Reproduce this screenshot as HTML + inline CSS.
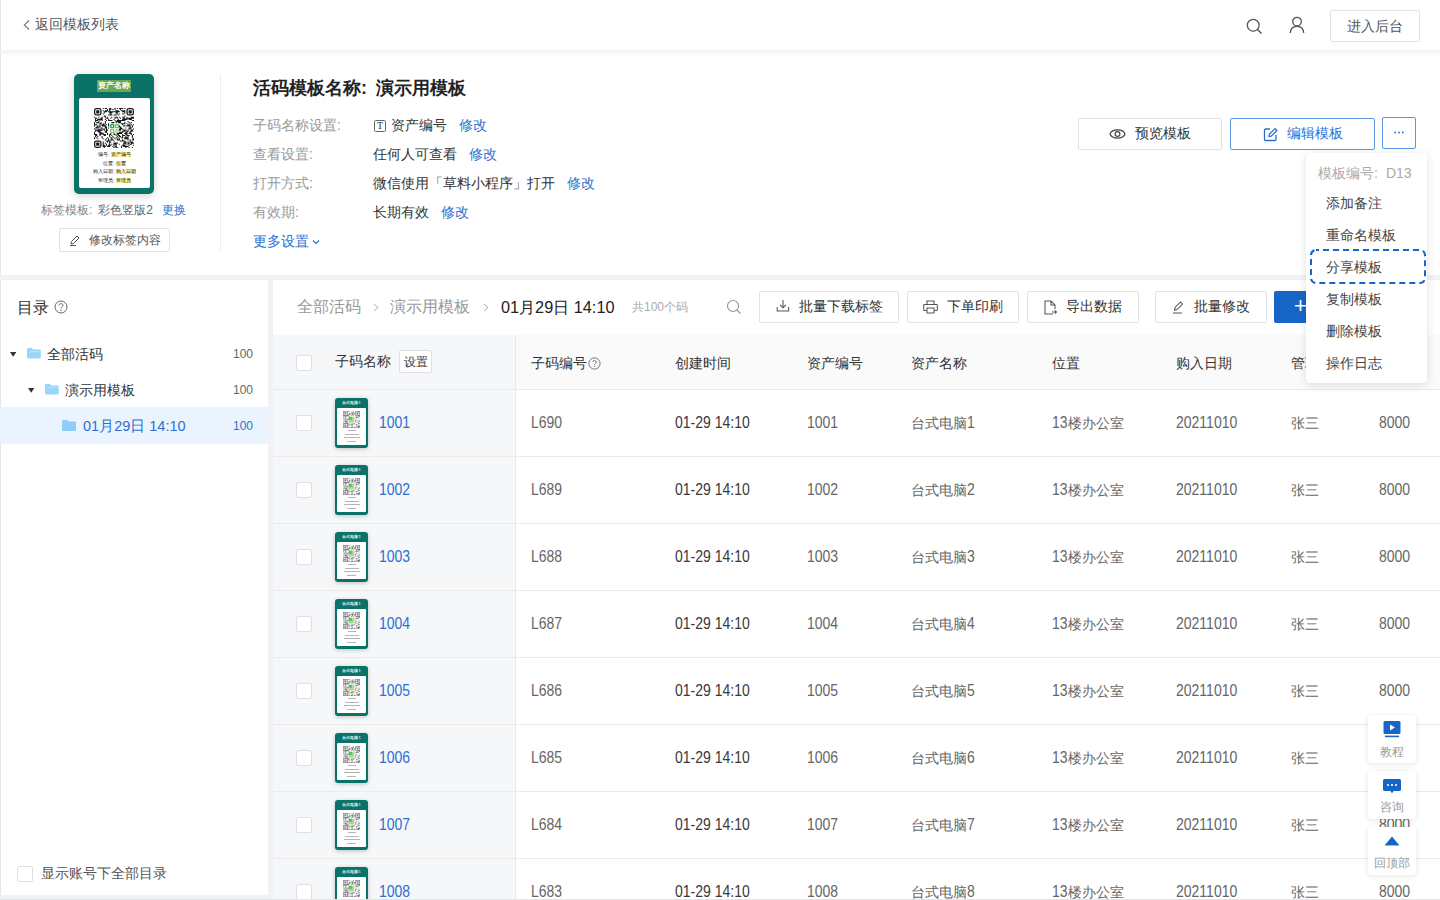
<!DOCTYPE html>
<html><head><meta charset="utf-8">
<style>
*{box-sizing:border-box;margin:0;padding:0}
html,body{width:1440px;height:900px;overflow:hidden;background:#f0f2f5;font-family:"Liberation Sans",sans-serif;color:#333}
.abs{position:absolute}
#hdr{position:absolute;left:0;top:0;width:1440px;height:50px;background:#fff;box-shadow:inset 1px 0 #e6e6e6}
#hdr .back{position:absolute;left:22px;top:14px;font-size:14px;color:#555;line-height:20px}
#info{position:absolute;left:0;top:52px;width:1440px;height:223px;background:#fff;box-shadow:inset 1px 0 #e6e6e6}
.shadow1{position:absolute;left:1px;top:50px;width:1439px;height:5px;background:linear-gradient(#f1f2f4,#f6f7f8 40%,#fdfdfd)}
#side{position:absolute;left:0;top:280px;width:268px;height:615px;background:#fff;box-shadow:inset 1px 0 #e6e6e6}
#main{position:absolute;left:273px;top:280px;width:1167px;height:620px;background:#fff}
.t14{font-size:14px;line-height:20px}
.gray{color:#999}
.blue{color:#2d6fd1}
.btn{position:absolute;border:1px solid #e2e2e2;border-radius:2px;background:#fff;font-size:14px;color:#333;display:flex;align-items:center;justify-content:center}
.row{position:absolute;left:273px;width:1167px;height:67px;border-bottom:1px solid #ebebeb;background:#fff}
.row .fix{position:absolute;left:0;top:0;width:243px;height:66px;background:#f6f7f9;border-right:1px solid #e8e9ee}
.cb{position:absolute;width:16px;height:16px;border:1px solid #dcdfe6;border-radius:2px;background:#fff}
.row .cb{left:23px;top:25px}
.th{position:absolute;left:62px;top:8px;width:33px;height:50px;background:#0b7268;border-radius:3px;box-shadow:0 1px 4px rgba(0,0,0,.22)}
.thh{height:10px;position:relative}.thh b{position:absolute;left:0;right:0;top:2px;text-align:center;font-size:3.8px;line-height:6px;color:rgba(255,255,255,.85);font-weight:bold;white-space:nowrap}
.thb{position:absolute;left:2px;top:10px;width:29px;height:37px;background:#fff;border-radius:1px}
.thb svg{display:block;margin:3px 0 0 6px}
.thb i{display:block;height:1.3px;margin:2.2px auto 0;background:#b5b5b5}
.nm{position:absolute;left:106px;top:23px;font-size:14px;line-height:20px;color:#2d6fd1;transform:scale(1.0,1.15);transform-origin:0 14.85px}
.c{position:absolute;top:23px;font-size:14px;line-height:20px;color:#666}
.dk{color:#3a3a3a}
.d{display:inline-block;transform:scaleY(1.2);transform-origin:0 14.85px}
#thead{position:absolute;left:273px;top:335px;width:1167px;height:55px;background:#fafafa;border-bottom:1px solid #e9e9e9}
#thead .fix{position:absolute;left:0;top:0;width:243px;height:54px;background:#f6f7f9;border-right:1px solid #e8e9ee}
.lbl{left:0;width:71px;text-align:center;font-size:4.5px;line-height:7px;color:#222;white-space:nowrap}.lbl b{font-weight:normal;background:#fff59d}
.cnt{left:233px;font-size:12px;line-height:16px;color:#666}
.dd{left:20px;color:#444;white-space:nowrap}
.fl{position:absolute;left:1368px;width:48px;height:48px;background:#fff;border-radius:4px;box-shadow:0 1px 6px rgba(0,0,0,.1)}
.fl span{position:absolute;left:0;right:0;top:28px;text-align:center;font-size:12px;line-height:16px;color:#999;white-space:nowrap}
.hc{position:absolute;top:16px;font-size:14px;line-height:20px;color:#333}
</style></head><body>
<div id="hdr">
  <span class="abs" style="left:22px;top:17px;width:9px;height:12px"><svg width="9" height="12" viewBox="0 0 9 12"><path d="M7 1.5 L2.3 6 L7 10.5" fill="none" stroke="#777" stroke-width="1.1"/></svg></span>
  <span class="abs t14" style="left:35px;top:14px;color:#555">返回模板列表</span>
  <span class="abs" style="left:1246px;top:18px"><svg width="17" height="17" viewBox="0 0 17 17"><circle cx="7.2" cy="7.2" r="5.9" fill="none" stroke="#555" stroke-width="1.25"/><path d="M11.5 11.5 L15.5 15.5" stroke="#555" stroke-width="1.4"/></svg></span>
  <span class="abs" style="left:1288px;top:16px"><svg width="18" height="18" viewBox="0 0 18 18"><circle cx="9" cy="5.6" r="4.3" fill="none" stroke="#555" stroke-width="1.3"/><path d="M2.3 17 C2.5 12.5 5.5 10.3 9 10.3 C12.5 10.3 15.5 12.5 15.7 17" fill="none" stroke="#555" stroke-width="1.3"/></svg></span>
  <div class="btn" style="left:1330px;top:10px;width:90px;height:32px;color:#555;padding-top:2px">进入后台</div>
</div>
<div id="info">
  <div class="abs" style="left:74px;top:22px;width:80px;height:120px;background:#0b7268;border-radius:5px;box-shadow:0 2px 8px rgba(0,0,0,.18)">
    <div class="abs" style="left:23px;top:6px;width:34px;height:12px;background:#6aa84f;color:#fff;font-size:8px;line-height:12px;font-weight:bold;text-align:center;white-space:nowrap;overflow:hidden">资产名称</div>
    <div class="abs" style="left:5px;top:24px;width:71px;height:90px;background:#fff;border-radius:2px">
      <div class="abs" style="left:15px;top:10px"><svg width="40" height="40" viewBox="0 0 37 37"><path d="M8 0h1v1h-1zM10 0h2v1h-2zM14 0h2v1h-2zM19 0h1v1h-1zM21 0h1v1h-1zM23 0h4v1h-4zM28 0h1v1h-1zM12 1h1v1h-1zM14 1h2v1h-2zM17 1h1v1h-1zM19 1h1v1h-1zM24 1h1v1h-1zM8 2h1v1h-1zM10 2h3v1h-3zM14 2h1v1h-1zM20 2h3v1h-3zM25 2h4v1h-4zM9 3h3v1h-3zM13 3h11v1h-11zM26 3h3v1h-3zM9 4h1v1h-1zM14 4h3v1h-3zM20 4h2v1h-2zM28 4h1v1h-1zM8 5h1v1h-1zM15 5h1v1h-1zM21 5h1v1h-1zM23 5h1v1h-1zM26 5h2v1h-2zM13 6h4v1h-4zM18 6h3v1h-3zM22 6h1v1h-1zM9 7h2v1h-2zM28 7h1v1h-1zM0 8h1v1h-1zM4 8h1v1h-1zM7 8h1v1h-1zM10 8h1v1h-1zM12 8h1v1h-1zM16 8h1v1h-1zM19 8h3v1h-3zM23 8h1v1h-1zM26 8h2v1h-2zM30 8h1v1h-1zM34 8h3v1h-3zM1 9h2v1h-2zM6 9h2v1h-2zM11 9h2v1h-2zM15 9h1v1h-1zM19 9h1v1h-1zM21 9h1v1h-1zM24 9h1v1h-1zM27 9h2v1h-2zM30 9h7v1h-7zM1 10h1v1h-1zM3 10h5v1h-5zM10 10h1v1h-1zM13 10h1v1h-1zM18 10h1v1h-1zM22 10h1v1h-1zM26 10h5v1h-5zM32 10h3v1h-3zM1 11h3v1h-3zM5 11h1v1h-1zM7 11h1v1h-1zM11 11h1v1h-1zM13 11h4v1h-4zM19 11h1v1h-1zM21 11h8v1h-8zM35 11h2v1h-2zM1 12h1v1h-1zM4 12h1v1h-1zM10 12h1v1h-1zM20 12h5v1h-5zM31 12h1v1h-1zM0 13h1v1h-1zM2 13h3v1h-3zM6 13h1v1h-1zM10 13h1v1h-1zM16 13h3v1h-3zM20 13h1v1h-1zM22 13h3v1h-3zM28 13h1v1h-1zM32 13h1v1h-1zM34 13h1v1h-1zM0 14h1v1h-1zM5 14h2v1h-2zM8 14h1v1h-1zM10 14h1v1h-1zM13 14h1v1h-1zM25 14h4v1h-4zM30 14h1v1h-1zM33 14h1v1h-1zM0 15h3v1h-3zM5 15h1v1h-1zM7 15h3v1h-3zM11 15h1v1h-1zM13 15h1v1h-1zM26 15h1v1h-1zM31 15h2v1h-2zM34 15h1v1h-1zM36 15h1v1h-1zM0 16h1v1h-1zM3 16h1v1h-1zM5 16h1v1h-1zM7 16h4v1h-4zM13 16h1v1h-1zM23 16h1v1h-1zM27 16h2v1h-2zM30 16h4v1h-4zM35 16h1v1h-1zM2 17h4v1h-4zM10 17h2v1h-2zM23 17h2v1h-2zM33 17h1v1h-1zM35 17h1v1h-1zM1 18h3v1h-3zM6 18h2v1h-2zM10 18h2v1h-2zM13 18h1v1h-1zM24 18h2v1h-2zM29 18h1v1h-1zM32 18h3v1h-3zM0 19h1v1h-1zM4 19h1v1h-1zM6 19h1v1h-1zM8 19h2v1h-2zM11 19h1v1h-1zM23 19h4v1h-4zM32 19h2v1h-2zM36 19h1v1h-1zM1 20h7v1h-7zM9 20h1v1h-1zM11 20h2v1h-2zM23 20h2v1h-2zM27 20h3v1h-3zM31 20h1v1h-1zM34 20h2v1h-2zM1 21h1v1h-1zM3 21h3v1h-3zM10 21h2v1h-2zM26 21h3v1h-3zM30 21h2v1h-2zM33 21h3v1h-3zM0 22h1v1h-1zM4 22h3v1h-3zM10 22h2v1h-2zM23 22h4v1h-4zM29 22h2v1h-2zM33 22h1v1h-1zM0 23h1v1h-1zM5 23h4v1h-4zM12 23h1v1h-1zM15 23h1v1h-1zM18 23h1v1h-1zM21 23h5v1h-5zM28 23h3v1h-3zM32 23h3v1h-3zM0 24h3v1h-3zM5 24h2v1h-2zM8 24h3v1h-3zM12 24h1v1h-1zM14 24h2v1h-2zM18 24h2v1h-2zM21 24h2v1h-2zM26 24h1v1h-1zM29 24h2v1h-2zM34 24h1v1h-1zM36 24h1v1h-1zM1 25h2v1h-2zM5 25h1v1h-1zM9 25h2v1h-2zM14 25h1v1h-1zM16 25h1v1h-1zM20 25h1v1h-1zM22 25h2v1h-2zM26 25h3v1h-3zM30 25h3v1h-3zM35 25h1v1h-1zM1 26h1v1h-1zM3 26h1v1h-1zM7 26h1v1h-1zM14 26h1v1h-1zM17 26h1v1h-1zM21 26h1v1h-1zM23 26h2v1h-2zM26 26h1v1h-1zM29 26h1v1h-1zM31 26h1v1h-1zM35 26h1v1h-1zM0 27h1v1h-1zM2 27h1v1h-1zM7 27h1v1h-1zM12 27h1v1h-1zM15 27h2v1h-2zM18 27h1v1h-1zM20 27h1v1h-1zM22 27h1v1h-1zM25 27h2v1h-2zM28 27h4v1h-4zM35 27h1v1h-1zM0 28h1v1h-1zM3 28h1v1h-1zM8 28h1v1h-1zM11 28h1v1h-1zM13 28h1v1h-1zM16 28h1v1h-1zM19 28h1v1h-1zM21 28h1v1h-1zM23 28h1v1h-1zM28 28h4v1h-4zM36 28h1v1h-1zM10 29h1v1h-1zM13 29h1v1h-1zM15 29h3v1h-3zM21 29h3v1h-3zM26 29h1v1h-1zM31 29h1v1h-1zM33 29h1v1h-1zM35 29h2v1h-2zM11 30h4v1h-4zM18 30h1v1h-1zM24 30h5v1h-5zM33 30h1v1h-1zM8 31h1v1h-1zM12 31h1v1h-1zM14 31h2v1h-2zM28 31h2v1h-2zM31 31h1v1h-1zM33 31h3v1h-3zM8 32h1v1h-1zM10 32h1v1h-1zM14 32h1v1h-1zM18 32h4v1h-4zM27 32h3v1h-3zM31 32h2v1h-2zM34 32h3v1h-3zM8 33h1v1h-1zM11 33h1v1h-1zM14 33h1v1h-1zM16 33h1v1h-1zM18 33h3v1h-3zM23 33h1v1h-1zM27 33h1v1h-1zM29 33h1v1h-1zM31 33h1v1h-1zM33 33h2v1h-2zM8 34h2v1h-2zM11 34h1v1h-1zM13 34h3v1h-3zM18 34h1v1h-1zM20 34h1v1h-1zM26 34h3v1h-3zM32 34h1v1h-1zM36 34h1v1h-1zM8 35h3v1h-3zM12 35h3v1h-3zM17 35h1v1h-1zM19 35h2v1h-2zM25 35h1v1h-1zM27 35h5v1h-5zM9 36h1v1h-1zM18 36h1v1h-1zM20 36h2v1h-2zM25 36h1v1h-1zM29 36h1v1h-1zM32 36h1v1h-1zM35 36h1v1h-1z" fill="#1a1a1a"/><rect x="0.6" y="0.6" width="5.8" height="5.8" rx="1.6" fill="none" stroke="#1a1a1a" stroke-width="1.2"/><rect x="2" y="2" width="3" height="3" rx=".6" fill="#1a1a1a"/><rect x="30.6" y="0.6" width="5.8" height="5.8" rx="1.6" fill="none" stroke="#1a1a1a" stroke-width="1.2"/><rect x="32" y="2" width="3" height="3" rx=".6" fill="#1a1a1a"/><rect x="0.6" y="30.6" width="5.8" height="5.8" rx="1.6" fill="none" stroke="#1a1a1a" stroke-width="1.2"/><rect x="2" y="32" width="3" height="3" rx=".6" fill="#1a1a1a"/><rect x="14.8" y="14.8" width="4" height="4" rx="1" fill="#1fae4b"/><rect x="19.2" y="14.8" width="4" height="4" rx="1" fill="#6cc46a"/><rect x="14.8" y="19.2" width="4" height="4" rx="1" fill="#8fd07a"/><rect x="19.2" y="19.2" width="4" height="4" rx="1" fill="#b6df9c"/><circle cx="16.8" cy="16.8" r=".8" fill="#fff"/><circle cx="21.2" cy="16.8" r=".8" fill="#fff"/><circle cx="16.8" cy="21.2" r=".8" fill="#fff"/></svg></div>
      <div class="abs lbl" style="top:53px">编号: <b>资产编号</b></div>
      <div class="abs lbl" style="top:61.5px">位置: <b>位置</b></div>
      <div class="abs lbl" style="top:70px">购入日期: <b>购入日期</b></div>
      <div class="abs lbl" style="top:78.5px">管理员: <b>管理员</b></div>
    </div>
  </div>
  <div class="abs" style="left:41px;top:150px;font-size:12px;line-height:16px;color:#888;white-space:nowrap">标签模板<span style="margin-right:6px">:</span><span style="color:#666">彩色竖版2</span><span class="blue" style="margin-left:9px">更换</span></div>
  <div class="btn" style="left:59px;top:176px;width:111px;height:24px;font-size:12px;color:#555"><svg width="12" height="12" viewBox="0 0 12 12" style="margin-right:8px"><path d="M2 10 L2.5 7.5 L8 2 L10 4 L4.5 9.5 Z M1 11.5 H7" fill="none" stroke="#555" stroke-width="1"/></svg>修改标签内容</div>
  <div class="abs" style="left:220px;top:22px;width:1px;height:178px;background:#eee"></div>
  <div class="abs" style="left:253px;top:24px;font-size:18px;line-height:24px;font-weight:bold;color:#222">活码模板名称<span style="margin-right:9px">:</span>演示用模板</div>
  <div class="abs t14 gray" style="left:253px;top:63px">子码名称设置:</div>
  <div class="abs t14 gray" style="left:253px;top:92px">查看设置:</div>
  <div class="abs t14 gray" style="left:253px;top:121px">打开方式:</div>
  <div class="abs t14 gray" style="left:253px;top:150px">有效期:</div>
  <div class="abs t14 blue" style="left:253px;top:179px">更多设置<svg width="8" height="6" viewBox="0 0 8 6" style="margin-left:3px;vertical-align:1px"><path d="M1 1.5 L4 4.5 L7 1.5" fill="none" stroke="#2d6fd1" stroke-width="1.2"/></svg></div>
  <div class="abs t14" style="left:373px;top:63px"><span style="display:inline-block;width:12px;height:12px;border:1px solid #666;border-radius:1.5px;font-size:10px;line-height:10px;text-align:center;vertical-align:1px;margin-left:1px;margin-right:5px;font-family:'Liberation Serif',serif;color:#333">T</span>资产编号 <span class="blue">&nbsp;&nbsp;修改</span></div>
  <div class="abs t14" style="left:373px;top:92px">任何人可查看 <span class="blue">&nbsp;&nbsp;修改</span></div>
  <div class="abs t14" style="left:373px;top:121px">微信使用「草料小程序」打开 <span class="blue">&nbsp;&nbsp;修改</span></div>
  <div class="abs t14" style="left:373px;top:150px">长期有效 <span class="blue">&nbsp;&nbsp;修改</span></div>
  <div class="btn" style="left:1078px;top:66px;width:144px;height:32px;color:#333"><svg width="17" height="12" viewBox="0 0 17 12" style="margin-right:9px"><path d="M1 6 C3 0.6 14 0.6 16 6 C14 11.4 3 11.4 1 6 Z" fill="none" stroke="#444" stroke-width="1.2"/><circle cx="8.5" cy="6" r="2.4" fill="none" stroke="#444" stroke-width="1.2"/></svg>预览模板</div>
  <div class="btn" style="left:1230px;top:66px;width:145px;height:32px;color:#2d6fd1;border-color:#5a98e4"><svg width="15" height="15" viewBox="0 0 15 15" style="margin-right:9px"><path d="M7 2 H2.5 A1 1 0 0 0 1.5 3 V12.5 A1 1 0 0 0 2.5 13.5 H12 A1 1 0 0 0 13 12.5 V8" fill="none" stroke="#2d6fd1" stroke-width="1.3"/><path d="M6 9.5 L6.3 7.3 L12 1.6 L13.9 3.5 L8.2 9.2 Z" fill="none" stroke="#2d6fd1" stroke-width="1.3"/></svg>编辑模板</div>
  <div class="btn" style="left:1382px;top:64.5px;width:34px;height:32px;border-color:#5a98e4"><svg width="10" height="3" viewBox="0 0 10 3"><circle cx="1.2" cy="1.5" r=".9" fill="#2d6fd1"/><circle cx="5" cy="1.5" r=".9" fill="#2d6fd1"/><circle cx="8.8" cy="1.5" r=".9" fill="#2d6fd1"/></svg></div>
</div>
<div class="shadow1"></div>
<div id="side">
  <div class="abs" style="left:17px;top:17px;font-size:16px;line-height:22px;color:#333">目录</div>
  <span class="abs" style="left:54px;top:20px"><svg width="14" height="14" viewBox="0 0 14 14"><circle cx="7" cy="7" r="6" fill="none" stroke="#666" stroke-width="1"/><path d="M5 5.3 C5 3.2 9 3.2 9 5.3 C9 6.6 7 6.8 7 8.3" fill="none" stroke="#666" stroke-width="1"/><circle cx="7" cy="10.2" r=".7" fill="#666"/></svg></span>
  <svg class="abs" style="left:10px;top:71.7px" width="6.4" height="5" viewBox="0 0 6.4 5"><path d="M0 0 H6.4 L3.2 4.7 Z" fill="#333"/></svg>
  <svg class="abs" style="left:26.5px;top:68.3px" width="14" height="10.5" viewBox="0 0 14 10.5"><path d="M0 1.2 A1.2 1.2 0 0 1 1.2 0 H4.8 L6.2 1.4 H12.6 A1.2 1.2 0 0 1 13.8 2.6 V9.3 A1.2 1.2 0 0 1 12.6 10.5 H1.2 A1.2 1.2 0 0 1 0 9.3 Z" fill="#9ad5f8"/><path d="M2.2 5.2 L3 3.6 H13.8" fill="none" stroke="#c9e9fc" stroke-width=".7"/></svg>
  <div class="abs t14" style="left:47px;top:64px;color:#333">全部活码</div>
  <div class="abs cnt" style="top:66px">100</div>
  <svg class="abs" style="left:28px;top:107.7px" width="6.4" height="5" viewBox="0 0 6.4 5"><path d="M0 0 H6.4 L3.2 4.7 Z" fill="#333"/></svg>
  <svg class="abs" style="left:44.5px;top:104.3px" width="14" height="10.5" viewBox="0 0 14 10.5"><path d="M0 1.2 A1.2 1.2 0 0 1 1.2 0 H4.8 L6.2 1.4 H12.6 A1.2 1.2 0 0 1 13.8 2.6 V9.3 A1.2 1.2 0 0 1 12.6 10.5 H1.2 A1.2 1.2 0 0 1 0 9.3 Z" fill="#9ad5f8"/><path d="M2.2 5.2 L3 3.6 H13.8" fill="none" stroke="#c9e9fc" stroke-width=".7"/></svg>
  <div class="abs t14" style="left:65px;top:100px;color:#333">演示用模板</div>
  <div class="abs cnt" style="top:102px">100</div>
  <div class="abs" style="left:0;top:127px;width:268px;height:37px;background:#e9f4fe"></div>
  <svg class="abs" style="left:62px;top:140px" width="14" height="11" viewBox="0 0 14 11"><path d="M0 1 A1 1 0 0 1 1 0 H5 L6.5 1.5 H13 A1 1 0 0 1 14 2.5 V10 A1 1 0 0 1 13 11 H1 A1 1 0 0 1 0 10 Z" fill="#8fcdf8"/></svg>
  <div class="abs" style="left:83px;top:135px;font-size:14.5px;line-height:22px;color:#2d6fd1">01月29日 14:10</div>
  <div class="abs cnt" style="top:138px;color:#2d6fd1">100</div>
  <span class="cb" style="left:17px;top:586px"></span>
  <div class="abs t14" style="left:41px;top:583px;color:#555">显示账号下全部目录</div>
</div>
<div id="main">
  <div class="abs" style="left:24px;top:16px;font-size:16px;line-height:22px;color:#999;white-space:nowrap">全部活码</div>
  <svg class="abs" style="left:100px;top:23px" width="6" height="9" viewBox="0 0 6 9"><path d="M1 1 L5 4.5 L1 8" fill="none" stroke="#aaa" stroke-width="1"/></svg>
  <div class="abs" style="left:117px;top:16px;font-size:16px;line-height:22px;color:#999;white-space:nowrap">演示用模板</div>
  <svg class="abs" style="left:210px;top:23px" width="6" height="9" viewBox="0 0 6 9"><path d="M1 1 L5 4.5 L1 8" fill="none" stroke="#aaa" stroke-width="1"/></svg>
  <div class="abs" style="left:228px;top:16px;font-size:16.3px;line-height:22px;color:#222;white-space:nowrap">01月29日 14:10</div>
  <div class="abs" style="left:359px;top:19px;font-size:12px;line-height:16px;color:#aaa;white-space:nowrap">共100个码</div>
  <svg class="abs" style="left:453px;top:19px" width="16" height="16" viewBox="0 0 16 16"><circle cx="7" cy="7" r="5.5" fill="none" stroke="#999" stroke-width="1.2"/><path d="M11 11 L14.5 14.5" stroke="#999" stroke-width="1.3"/></svg>
  <div class="btn" style="left:486px;top:11px;width:140px;height:32px"><svg width="14" height="14" viewBox="0 0 14 14" style="margin-right:9px;position:relative;top:-1px"><path d="M7 1 V8.8 M4 5.8 L7 8.8 L10 5.8 M1.2 8 V12 H12.6 V8" fill="none" stroke="#555" stroke-width="1.05"/></svg>批量下载标签</div>
  <div class="btn" style="left:634px;top:11px;width:112px;height:32px"><svg width="15" height="14" viewBox="0 0 15 14" style="margin-right:9px"><path d="M4 4.5 V1 H11 V4.5 M4 10.5 H1.5 A0.8 .8 0 0 1 .7 9.7 V5.3 A.8 .8 0 0 1 1.5 4.5 H13.5 A.8 .8 0 0 1 14.3 5.3 V9.7 A.8 .8 0 0 1 13.5 10.5 H11 M4 8 H11 V13 H4 Z" fill="none" stroke="#555" stroke-width="1.05"/></svg>下单印刷</div>
  <div class="btn" style="left:754px;top:11px;width:112px;height:32px"><svg width="13" height="15" viewBox="0 0 13 15" style="margin-right:9px"><path d="M9 14 H1 V1 H7 L11 5 V9 M7 1 V5 H11 M8 12 H12.5 M10.8 10.3 L12.5 12 L10.8 13.7" fill="none" stroke="#555" stroke-width="1.05"/></svg>导出数据</div>
  <div class="btn" style="left:882px;top:11px;width:112px;height:32px"><svg width="13" height="14" viewBox="0 0 13 14" style="margin-right:9px"><path d="M2.5 10 L3 7.5 L8.5 2 L10.5 4 L5 9.5 Z M1 13 H10" fill="none" stroke="#555" stroke-width="1.05"/></svg>批量修改</div>
  <div class="abs" style="left:1001px;top:11px;width:146px;height:32px;background:#1766c7;border-radius:2px;color:#fff;font-size:22px;line-height:30px;padding-left:20px">+</div>
</div>
<div id="thead">
  <div class="fix"><span class="cb" style="left:23px;top:20px"></span><span class="hc" style="left:62px">子码名称</span><span class="abs" style="left:126px;top:15px;width:33px;height:23px;border:1px solid #dcdfe6;border-radius:2px;background:#fff;font-size:12px;line-height:23px;text-align:center;color:#333">设置</span></div>
  <span class="hc" style="left:258px;top:17.5px">子码编号<svg width="13" height="13" viewBox="0 0 13 13" style="vertical-align:-2px;margin-left:1px"><circle cx="6.5" cy="6.5" r="5.6" fill="none" stroke="#666" stroke-width=".9"/><path d="M4.7 5 C4.7 3.1 8.3 3.1 8.3 5 C8.3 6.2 6.5 6.3 6.5 7.7" fill="none" stroke="#666" stroke-width=".9"/><circle cx="6.5" cy="9.5" r=".6" fill="#666"/></svg></span>
  <span class="hc" style="left:402px;top:17.5px">创建时间</span>
  <span class="hc" style="left:534px;top:17.5px">资产编号</span>
  <span class="hc" style="left:638px;top:17.5px">资产名称</span>
  <span class="hc" style="left:779px;top:17.5px">位置</span>
  <span class="hc" style="left:903px;top:17.5px">购入日期</span>
  <span class="hc" style="left:1018px;top:17.5px">管理员</span>
</div>
<div class="row" style="top:390px">
<div class="fix"><span class="cb" style="top:25px"></span><div class="th"><div class="thh"><b>台式电脑1</b></div><div class="thb"><svg width="17" height="17" viewBox="0 0 25 25"><path d="M0 0h7v1h-7zM8 0h2v1h-2zM15 0h1v1h-1zM18 0h7v1h-7zM0 1h1v1h-1zM6 1h2v1h-2zM12 1h3v1h-3zM18 1h1v1h-1zM24 1h1v1h-1zM0 2h1v1h-1zM2 2h3v1h-3zM6 2h1v1h-1zM11 2h1v1h-1zM14 2h2v1h-2zM18 2h1v1h-1zM20 2h3v1h-3zM24 2h1v1h-1zM0 3h1v1h-1zM2 3h3v1h-3zM6 3h1v1h-1zM9 3h2v1h-2zM12 3h3v1h-3zM16 3h3v1h-3zM20 3h3v1h-3zM24 3h1v1h-1zM0 4h1v1h-1zM2 4h3v1h-3zM6 4h1v1h-1zM8 4h2v1h-2zM13 4h2v1h-2zM16 4h1v1h-1zM18 4h1v1h-1zM20 4h3v1h-3zM24 4h1v1h-1zM0 5h1v1h-1zM6 5h1v1h-1zM8 5h4v1h-4zM13 5h2v1h-2zM16 5h1v1h-1zM18 5h1v1h-1zM24 5h1v1h-1zM0 6h9v1h-9zM12 6h2v1h-2zM15 6h1v1h-1zM18 6h7v1h-7zM0 7h1v1h-1zM2 7h5v1h-5zM8 7h2v1h-2zM16 7h1v1h-1zM21 7h4v1h-4zM1 8h1v1h-1zM3 8h1v1h-1zM19 8h2v1h-2zM24 8h1v1h-1zM0 9h1v1h-1zM3 9h1v1h-1zM18 9h5v1h-5zM0 10h1v1h-1zM2 10h3v1h-3zM7 10h1v1h-1zM19 10h1v1h-1zM23 10h1v1h-1zM4 11h1v1h-1zM7 11h1v1h-1zM17 11h1v1h-1zM0 12h1v1h-1zM2 12h2v1h-2zM5 12h3v1h-3zM19 12h1v1h-1zM23 12h1v1h-1zM1 13h2v1h-2zM5 13h3v1h-3zM18 13h1v1h-1zM20 13h1v1h-1zM3 14h2v1h-2zM18 14h1v1h-1zM20 14h1v1h-1zM23 14h2v1h-2zM0 15h1v1h-1zM2 15h4v1h-4zM7 15h1v1h-1zM18 15h1v1h-1zM22 15h2v1h-2zM3 16h4v1h-4zM18 16h2v1h-2zM22 16h2v1h-2zM1 17h1v1h-1zM4 17h1v1h-1zM6 17h2v1h-2zM9 17h1v1h-1zM12 17h1v1h-1zM14 17h1v1h-1zM17 17h1v1h-1zM21 17h1v1h-1zM0 18h8v1h-8zM10 18h1v1h-1zM13 18h1v1h-1zM15 18h2v1h-2zM22 18h3v1h-3zM0 19h1v1h-1zM6 19h1v1h-1zM8 19h1v1h-1zM10 19h1v1h-1zM12 19h3v1h-3zM17 19h1v1h-1zM19 19h4v1h-4zM0 20h1v1h-1zM2 20h3v1h-3zM6 20h4v1h-4zM12 20h2v1h-2zM15 20h1v1h-1zM19 20h1v1h-1zM0 21h1v1h-1zM2 21h3v1h-3zM6 21h1v1h-1zM11 21h1v1h-1zM13 21h1v1h-1zM20 21h1v1h-1zM23 21h2v1h-2zM0 22h1v1h-1zM2 22h3v1h-3zM6 22h2v1h-2zM13 22h1v1h-1zM20 22h5v1h-5zM0 23h1v1h-1zM6 23h1v1h-1zM8 23h2v1h-2zM12 23h2v1h-2zM16 23h3v1h-3zM20 23h1v1h-1zM22 23h3v1h-3zM0 24h8v1h-8zM9 24h1v1h-1zM11 24h4v1h-4zM16 24h2v1h-2zM19 24h1v1h-1zM21 24h3v1h-3z" fill="#555" fill-opacity=".75"/><rect x="8.5" y="8.5" width="8" height="8" fill="#a5dd86"/><rect x="8.5" y="8.5" width="4.5" height="4.5" fill="#4cc06a"/></svg><i style="width:8px"></i><i style="width:14px"></i><i style="width:16px"></i><i style="width:9px"></i></div></div><span class="nm">1001</span></div>
<span class="c" style="left:258px"><span class="d">L690</span></span>
<span class="c dk" style="left:402px"><span class="d">01-29 14:10</span></span>
<span class="c" style="left:534px"><span class="d">1001</span></span>
<span class="c" style="left:638px">台式电脑<span class="d">1</span></span>
<span class="c" style="left:779px"><span class="d">13</span>楼办公室</span>
<span class="c" style="left:903px"><span class="d">20211010</span></span>
<span class="c" style="left:1018px">张三</span>
<span class="c" style="left:1106px"><span class="d">8000</span></span>
</div><div class="row" style="top:457px">
<div class="fix"><span class="cb" style="top:25px"></span><div class="th"><div class="thh"><b>台式电脑1</b></div><div class="thb"><svg width="17" height="17" viewBox="0 0 25 25"><path d="M0 0h7v1h-7zM8 0h2v1h-2zM15 0h1v1h-1zM18 0h7v1h-7zM0 1h1v1h-1zM6 1h2v1h-2zM12 1h3v1h-3zM18 1h1v1h-1zM24 1h1v1h-1zM0 2h1v1h-1zM2 2h3v1h-3zM6 2h1v1h-1zM11 2h1v1h-1zM14 2h2v1h-2zM18 2h1v1h-1zM20 2h3v1h-3zM24 2h1v1h-1zM0 3h1v1h-1zM2 3h3v1h-3zM6 3h1v1h-1zM9 3h2v1h-2zM12 3h3v1h-3zM16 3h3v1h-3zM20 3h3v1h-3zM24 3h1v1h-1zM0 4h1v1h-1zM2 4h3v1h-3zM6 4h1v1h-1zM8 4h2v1h-2zM13 4h2v1h-2zM16 4h1v1h-1zM18 4h1v1h-1zM20 4h3v1h-3zM24 4h1v1h-1zM0 5h1v1h-1zM6 5h1v1h-1zM8 5h4v1h-4zM13 5h2v1h-2zM16 5h1v1h-1zM18 5h1v1h-1zM24 5h1v1h-1zM0 6h9v1h-9zM12 6h2v1h-2zM15 6h1v1h-1zM18 6h7v1h-7zM0 7h1v1h-1zM2 7h5v1h-5zM8 7h2v1h-2zM16 7h1v1h-1zM21 7h4v1h-4zM1 8h1v1h-1zM3 8h1v1h-1zM19 8h2v1h-2zM24 8h1v1h-1zM0 9h1v1h-1zM3 9h1v1h-1zM18 9h5v1h-5zM0 10h1v1h-1zM2 10h3v1h-3zM7 10h1v1h-1zM19 10h1v1h-1zM23 10h1v1h-1zM4 11h1v1h-1zM7 11h1v1h-1zM17 11h1v1h-1zM0 12h1v1h-1zM2 12h2v1h-2zM5 12h3v1h-3zM19 12h1v1h-1zM23 12h1v1h-1zM1 13h2v1h-2zM5 13h3v1h-3zM18 13h1v1h-1zM20 13h1v1h-1zM3 14h2v1h-2zM18 14h1v1h-1zM20 14h1v1h-1zM23 14h2v1h-2zM0 15h1v1h-1zM2 15h4v1h-4zM7 15h1v1h-1zM18 15h1v1h-1zM22 15h2v1h-2zM3 16h4v1h-4zM18 16h2v1h-2zM22 16h2v1h-2zM1 17h1v1h-1zM4 17h1v1h-1zM6 17h2v1h-2zM9 17h1v1h-1zM12 17h1v1h-1zM14 17h1v1h-1zM17 17h1v1h-1zM21 17h1v1h-1zM0 18h8v1h-8zM10 18h1v1h-1zM13 18h1v1h-1zM15 18h2v1h-2zM22 18h3v1h-3zM0 19h1v1h-1zM6 19h1v1h-1zM8 19h1v1h-1zM10 19h1v1h-1zM12 19h3v1h-3zM17 19h1v1h-1zM19 19h4v1h-4zM0 20h1v1h-1zM2 20h3v1h-3zM6 20h4v1h-4zM12 20h2v1h-2zM15 20h1v1h-1zM19 20h1v1h-1zM0 21h1v1h-1zM2 21h3v1h-3zM6 21h1v1h-1zM11 21h1v1h-1zM13 21h1v1h-1zM20 21h1v1h-1zM23 21h2v1h-2zM0 22h1v1h-1zM2 22h3v1h-3zM6 22h2v1h-2zM13 22h1v1h-1zM20 22h5v1h-5zM0 23h1v1h-1zM6 23h1v1h-1zM8 23h2v1h-2zM12 23h2v1h-2zM16 23h3v1h-3zM20 23h1v1h-1zM22 23h3v1h-3zM0 24h8v1h-8zM9 24h1v1h-1zM11 24h4v1h-4zM16 24h2v1h-2zM19 24h1v1h-1zM21 24h3v1h-3z" fill="#555" fill-opacity=".75"/><rect x="8.5" y="8.5" width="8" height="8" fill="#a5dd86"/><rect x="8.5" y="8.5" width="4.5" height="4.5" fill="#4cc06a"/></svg><i style="width:8px"></i><i style="width:14px"></i><i style="width:16px"></i><i style="width:9px"></i></div></div><span class="nm">1002</span></div>
<span class="c" style="left:258px"><span class="d">L689</span></span>
<span class="c dk" style="left:402px"><span class="d">01-29 14:10</span></span>
<span class="c" style="left:534px"><span class="d">1002</span></span>
<span class="c" style="left:638px">台式电脑<span class="d">2</span></span>
<span class="c" style="left:779px"><span class="d">13</span>楼办公室</span>
<span class="c" style="left:903px"><span class="d">20211010</span></span>
<span class="c" style="left:1018px">张三</span>
<span class="c" style="left:1106px"><span class="d">8000</span></span>
</div><div class="row" style="top:524px">
<div class="fix"><span class="cb" style="top:25px"></span><div class="th"><div class="thh"><b>台式电脑1</b></div><div class="thb"><svg width="17" height="17" viewBox="0 0 25 25"><path d="M0 0h7v1h-7zM8 0h2v1h-2zM15 0h1v1h-1zM18 0h7v1h-7zM0 1h1v1h-1zM6 1h2v1h-2zM12 1h3v1h-3zM18 1h1v1h-1zM24 1h1v1h-1zM0 2h1v1h-1zM2 2h3v1h-3zM6 2h1v1h-1zM11 2h1v1h-1zM14 2h2v1h-2zM18 2h1v1h-1zM20 2h3v1h-3zM24 2h1v1h-1zM0 3h1v1h-1zM2 3h3v1h-3zM6 3h1v1h-1zM9 3h2v1h-2zM12 3h3v1h-3zM16 3h3v1h-3zM20 3h3v1h-3zM24 3h1v1h-1zM0 4h1v1h-1zM2 4h3v1h-3zM6 4h1v1h-1zM8 4h2v1h-2zM13 4h2v1h-2zM16 4h1v1h-1zM18 4h1v1h-1zM20 4h3v1h-3zM24 4h1v1h-1zM0 5h1v1h-1zM6 5h1v1h-1zM8 5h4v1h-4zM13 5h2v1h-2zM16 5h1v1h-1zM18 5h1v1h-1zM24 5h1v1h-1zM0 6h9v1h-9zM12 6h2v1h-2zM15 6h1v1h-1zM18 6h7v1h-7zM0 7h1v1h-1zM2 7h5v1h-5zM8 7h2v1h-2zM16 7h1v1h-1zM21 7h4v1h-4zM1 8h1v1h-1zM3 8h1v1h-1zM19 8h2v1h-2zM24 8h1v1h-1zM0 9h1v1h-1zM3 9h1v1h-1zM18 9h5v1h-5zM0 10h1v1h-1zM2 10h3v1h-3zM7 10h1v1h-1zM19 10h1v1h-1zM23 10h1v1h-1zM4 11h1v1h-1zM7 11h1v1h-1zM17 11h1v1h-1zM0 12h1v1h-1zM2 12h2v1h-2zM5 12h3v1h-3zM19 12h1v1h-1zM23 12h1v1h-1zM1 13h2v1h-2zM5 13h3v1h-3zM18 13h1v1h-1zM20 13h1v1h-1zM3 14h2v1h-2zM18 14h1v1h-1zM20 14h1v1h-1zM23 14h2v1h-2zM0 15h1v1h-1zM2 15h4v1h-4zM7 15h1v1h-1zM18 15h1v1h-1zM22 15h2v1h-2zM3 16h4v1h-4zM18 16h2v1h-2zM22 16h2v1h-2zM1 17h1v1h-1zM4 17h1v1h-1zM6 17h2v1h-2zM9 17h1v1h-1zM12 17h1v1h-1zM14 17h1v1h-1zM17 17h1v1h-1zM21 17h1v1h-1zM0 18h8v1h-8zM10 18h1v1h-1zM13 18h1v1h-1zM15 18h2v1h-2zM22 18h3v1h-3zM0 19h1v1h-1zM6 19h1v1h-1zM8 19h1v1h-1zM10 19h1v1h-1zM12 19h3v1h-3zM17 19h1v1h-1zM19 19h4v1h-4zM0 20h1v1h-1zM2 20h3v1h-3zM6 20h4v1h-4zM12 20h2v1h-2zM15 20h1v1h-1zM19 20h1v1h-1zM0 21h1v1h-1zM2 21h3v1h-3zM6 21h1v1h-1zM11 21h1v1h-1zM13 21h1v1h-1zM20 21h1v1h-1zM23 21h2v1h-2zM0 22h1v1h-1zM2 22h3v1h-3zM6 22h2v1h-2zM13 22h1v1h-1zM20 22h5v1h-5zM0 23h1v1h-1zM6 23h1v1h-1zM8 23h2v1h-2zM12 23h2v1h-2zM16 23h3v1h-3zM20 23h1v1h-1zM22 23h3v1h-3zM0 24h8v1h-8zM9 24h1v1h-1zM11 24h4v1h-4zM16 24h2v1h-2zM19 24h1v1h-1zM21 24h3v1h-3z" fill="#555" fill-opacity=".75"/><rect x="8.5" y="8.5" width="8" height="8" fill="#a5dd86"/><rect x="8.5" y="8.5" width="4.5" height="4.5" fill="#4cc06a"/></svg><i style="width:8px"></i><i style="width:14px"></i><i style="width:16px"></i><i style="width:9px"></i></div></div><span class="nm">1003</span></div>
<span class="c" style="left:258px"><span class="d">L688</span></span>
<span class="c dk" style="left:402px"><span class="d">01-29 14:10</span></span>
<span class="c" style="left:534px"><span class="d">1003</span></span>
<span class="c" style="left:638px">台式电脑<span class="d">3</span></span>
<span class="c" style="left:779px"><span class="d">13</span>楼办公室</span>
<span class="c" style="left:903px"><span class="d">20211010</span></span>
<span class="c" style="left:1018px">张三</span>
<span class="c" style="left:1106px"><span class="d">8000</span></span>
</div><div class="row" style="top:591px">
<div class="fix"><span class="cb" style="top:25px"></span><div class="th"><div class="thh"><b>台式电脑1</b></div><div class="thb"><svg width="17" height="17" viewBox="0 0 25 25"><path d="M0 0h7v1h-7zM8 0h2v1h-2zM15 0h1v1h-1zM18 0h7v1h-7zM0 1h1v1h-1zM6 1h2v1h-2zM12 1h3v1h-3zM18 1h1v1h-1zM24 1h1v1h-1zM0 2h1v1h-1zM2 2h3v1h-3zM6 2h1v1h-1zM11 2h1v1h-1zM14 2h2v1h-2zM18 2h1v1h-1zM20 2h3v1h-3zM24 2h1v1h-1zM0 3h1v1h-1zM2 3h3v1h-3zM6 3h1v1h-1zM9 3h2v1h-2zM12 3h3v1h-3zM16 3h3v1h-3zM20 3h3v1h-3zM24 3h1v1h-1zM0 4h1v1h-1zM2 4h3v1h-3zM6 4h1v1h-1zM8 4h2v1h-2zM13 4h2v1h-2zM16 4h1v1h-1zM18 4h1v1h-1zM20 4h3v1h-3zM24 4h1v1h-1zM0 5h1v1h-1zM6 5h1v1h-1zM8 5h4v1h-4zM13 5h2v1h-2zM16 5h1v1h-1zM18 5h1v1h-1zM24 5h1v1h-1zM0 6h9v1h-9zM12 6h2v1h-2zM15 6h1v1h-1zM18 6h7v1h-7zM0 7h1v1h-1zM2 7h5v1h-5zM8 7h2v1h-2zM16 7h1v1h-1zM21 7h4v1h-4zM1 8h1v1h-1zM3 8h1v1h-1zM19 8h2v1h-2zM24 8h1v1h-1zM0 9h1v1h-1zM3 9h1v1h-1zM18 9h5v1h-5zM0 10h1v1h-1zM2 10h3v1h-3zM7 10h1v1h-1zM19 10h1v1h-1zM23 10h1v1h-1zM4 11h1v1h-1zM7 11h1v1h-1zM17 11h1v1h-1zM0 12h1v1h-1zM2 12h2v1h-2zM5 12h3v1h-3zM19 12h1v1h-1zM23 12h1v1h-1zM1 13h2v1h-2zM5 13h3v1h-3zM18 13h1v1h-1zM20 13h1v1h-1zM3 14h2v1h-2zM18 14h1v1h-1zM20 14h1v1h-1zM23 14h2v1h-2zM0 15h1v1h-1zM2 15h4v1h-4zM7 15h1v1h-1zM18 15h1v1h-1zM22 15h2v1h-2zM3 16h4v1h-4zM18 16h2v1h-2zM22 16h2v1h-2zM1 17h1v1h-1zM4 17h1v1h-1zM6 17h2v1h-2zM9 17h1v1h-1zM12 17h1v1h-1zM14 17h1v1h-1zM17 17h1v1h-1zM21 17h1v1h-1zM0 18h8v1h-8zM10 18h1v1h-1zM13 18h1v1h-1zM15 18h2v1h-2zM22 18h3v1h-3zM0 19h1v1h-1zM6 19h1v1h-1zM8 19h1v1h-1zM10 19h1v1h-1zM12 19h3v1h-3zM17 19h1v1h-1zM19 19h4v1h-4zM0 20h1v1h-1zM2 20h3v1h-3zM6 20h4v1h-4zM12 20h2v1h-2zM15 20h1v1h-1zM19 20h1v1h-1zM0 21h1v1h-1zM2 21h3v1h-3zM6 21h1v1h-1zM11 21h1v1h-1zM13 21h1v1h-1zM20 21h1v1h-1zM23 21h2v1h-2zM0 22h1v1h-1zM2 22h3v1h-3zM6 22h2v1h-2zM13 22h1v1h-1zM20 22h5v1h-5zM0 23h1v1h-1zM6 23h1v1h-1zM8 23h2v1h-2zM12 23h2v1h-2zM16 23h3v1h-3zM20 23h1v1h-1zM22 23h3v1h-3zM0 24h8v1h-8zM9 24h1v1h-1zM11 24h4v1h-4zM16 24h2v1h-2zM19 24h1v1h-1zM21 24h3v1h-3z" fill="#555" fill-opacity=".75"/><rect x="8.5" y="8.5" width="8" height="8" fill="#a5dd86"/><rect x="8.5" y="8.5" width="4.5" height="4.5" fill="#4cc06a"/></svg><i style="width:8px"></i><i style="width:14px"></i><i style="width:16px"></i><i style="width:9px"></i></div></div><span class="nm">1004</span></div>
<span class="c" style="left:258px"><span class="d">L687</span></span>
<span class="c dk" style="left:402px"><span class="d">01-29 14:10</span></span>
<span class="c" style="left:534px"><span class="d">1004</span></span>
<span class="c" style="left:638px">台式电脑<span class="d">4</span></span>
<span class="c" style="left:779px"><span class="d">13</span>楼办公室</span>
<span class="c" style="left:903px"><span class="d">20211010</span></span>
<span class="c" style="left:1018px">张三</span>
<span class="c" style="left:1106px"><span class="d">8000</span></span>
</div><div class="row" style="top:658px">
<div class="fix"><span class="cb" style="top:25px"></span><div class="th"><div class="thh"><b>台式电脑1</b></div><div class="thb"><svg width="17" height="17" viewBox="0 0 25 25"><path d="M0 0h7v1h-7zM8 0h2v1h-2zM15 0h1v1h-1zM18 0h7v1h-7zM0 1h1v1h-1zM6 1h2v1h-2zM12 1h3v1h-3zM18 1h1v1h-1zM24 1h1v1h-1zM0 2h1v1h-1zM2 2h3v1h-3zM6 2h1v1h-1zM11 2h1v1h-1zM14 2h2v1h-2zM18 2h1v1h-1zM20 2h3v1h-3zM24 2h1v1h-1zM0 3h1v1h-1zM2 3h3v1h-3zM6 3h1v1h-1zM9 3h2v1h-2zM12 3h3v1h-3zM16 3h3v1h-3zM20 3h3v1h-3zM24 3h1v1h-1zM0 4h1v1h-1zM2 4h3v1h-3zM6 4h1v1h-1zM8 4h2v1h-2zM13 4h2v1h-2zM16 4h1v1h-1zM18 4h1v1h-1zM20 4h3v1h-3zM24 4h1v1h-1zM0 5h1v1h-1zM6 5h1v1h-1zM8 5h4v1h-4zM13 5h2v1h-2zM16 5h1v1h-1zM18 5h1v1h-1zM24 5h1v1h-1zM0 6h9v1h-9zM12 6h2v1h-2zM15 6h1v1h-1zM18 6h7v1h-7zM0 7h1v1h-1zM2 7h5v1h-5zM8 7h2v1h-2zM16 7h1v1h-1zM21 7h4v1h-4zM1 8h1v1h-1zM3 8h1v1h-1zM19 8h2v1h-2zM24 8h1v1h-1zM0 9h1v1h-1zM3 9h1v1h-1zM18 9h5v1h-5zM0 10h1v1h-1zM2 10h3v1h-3zM7 10h1v1h-1zM19 10h1v1h-1zM23 10h1v1h-1zM4 11h1v1h-1zM7 11h1v1h-1zM17 11h1v1h-1zM0 12h1v1h-1zM2 12h2v1h-2zM5 12h3v1h-3zM19 12h1v1h-1zM23 12h1v1h-1zM1 13h2v1h-2zM5 13h3v1h-3zM18 13h1v1h-1zM20 13h1v1h-1zM3 14h2v1h-2zM18 14h1v1h-1zM20 14h1v1h-1zM23 14h2v1h-2zM0 15h1v1h-1zM2 15h4v1h-4zM7 15h1v1h-1zM18 15h1v1h-1zM22 15h2v1h-2zM3 16h4v1h-4zM18 16h2v1h-2zM22 16h2v1h-2zM1 17h1v1h-1zM4 17h1v1h-1zM6 17h2v1h-2zM9 17h1v1h-1zM12 17h1v1h-1zM14 17h1v1h-1zM17 17h1v1h-1zM21 17h1v1h-1zM0 18h8v1h-8zM10 18h1v1h-1zM13 18h1v1h-1zM15 18h2v1h-2zM22 18h3v1h-3zM0 19h1v1h-1zM6 19h1v1h-1zM8 19h1v1h-1zM10 19h1v1h-1zM12 19h3v1h-3zM17 19h1v1h-1zM19 19h4v1h-4zM0 20h1v1h-1zM2 20h3v1h-3zM6 20h4v1h-4zM12 20h2v1h-2zM15 20h1v1h-1zM19 20h1v1h-1zM0 21h1v1h-1zM2 21h3v1h-3zM6 21h1v1h-1zM11 21h1v1h-1zM13 21h1v1h-1zM20 21h1v1h-1zM23 21h2v1h-2zM0 22h1v1h-1zM2 22h3v1h-3zM6 22h2v1h-2zM13 22h1v1h-1zM20 22h5v1h-5zM0 23h1v1h-1zM6 23h1v1h-1zM8 23h2v1h-2zM12 23h2v1h-2zM16 23h3v1h-3zM20 23h1v1h-1zM22 23h3v1h-3zM0 24h8v1h-8zM9 24h1v1h-1zM11 24h4v1h-4zM16 24h2v1h-2zM19 24h1v1h-1zM21 24h3v1h-3z" fill="#555" fill-opacity=".75"/><rect x="8.5" y="8.5" width="8" height="8" fill="#a5dd86"/><rect x="8.5" y="8.5" width="4.5" height="4.5" fill="#4cc06a"/></svg><i style="width:8px"></i><i style="width:14px"></i><i style="width:16px"></i><i style="width:9px"></i></div></div><span class="nm">1005</span></div>
<span class="c" style="left:258px"><span class="d">L686</span></span>
<span class="c dk" style="left:402px"><span class="d">01-29 14:10</span></span>
<span class="c" style="left:534px"><span class="d">1005</span></span>
<span class="c" style="left:638px">台式电脑<span class="d">5</span></span>
<span class="c" style="left:779px"><span class="d">13</span>楼办公室</span>
<span class="c" style="left:903px"><span class="d">20211010</span></span>
<span class="c" style="left:1018px">张三</span>
<span class="c" style="left:1106px"><span class="d">8000</span></span>
</div><div class="row" style="top:725px">
<div class="fix"><span class="cb" style="top:25px"></span><div class="th"><div class="thh"><b>台式电脑1</b></div><div class="thb"><svg width="17" height="17" viewBox="0 0 25 25"><path d="M0 0h7v1h-7zM8 0h2v1h-2zM15 0h1v1h-1zM18 0h7v1h-7zM0 1h1v1h-1zM6 1h2v1h-2zM12 1h3v1h-3zM18 1h1v1h-1zM24 1h1v1h-1zM0 2h1v1h-1zM2 2h3v1h-3zM6 2h1v1h-1zM11 2h1v1h-1zM14 2h2v1h-2zM18 2h1v1h-1zM20 2h3v1h-3zM24 2h1v1h-1zM0 3h1v1h-1zM2 3h3v1h-3zM6 3h1v1h-1zM9 3h2v1h-2zM12 3h3v1h-3zM16 3h3v1h-3zM20 3h3v1h-3zM24 3h1v1h-1zM0 4h1v1h-1zM2 4h3v1h-3zM6 4h1v1h-1zM8 4h2v1h-2zM13 4h2v1h-2zM16 4h1v1h-1zM18 4h1v1h-1zM20 4h3v1h-3zM24 4h1v1h-1zM0 5h1v1h-1zM6 5h1v1h-1zM8 5h4v1h-4zM13 5h2v1h-2zM16 5h1v1h-1zM18 5h1v1h-1zM24 5h1v1h-1zM0 6h9v1h-9zM12 6h2v1h-2zM15 6h1v1h-1zM18 6h7v1h-7zM0 7h1v1h-1zM2 7h5v1h-5zM8 7h2v1h-2zM16 7h1v1h-1zM21 7h4v1h-4zM1 8h1v1h-1zM3 8h1v1h-1zM19 8h2v1h-2zM24 8h1v1h-1zM0 9h1v1h-1zM3 9h1v1h-1zM18 9h5v1h-5zM0 10h1v1h-1zM2 10h3v1h-3zM7 10h1v1h-1zM19 10h1v1h-1zM23 10h1v1h-1zM4 11h1v1h-1zM7 11h1v1h-1zM17 11h1v1h-1zM0 12h1v1h-1zM2 12h2v1h-2zM5 12h3v1h-3zM19 12h1v1h-1zM23 12h1v1h-1zM1 13h2v1h-2zM5 13h3v1h-3zM18 13h1v1h-1zM20 13h1v1h-1zM3 14h2v1h-2zM18 14h1v1h-1zM20 14h1v1h-1zM23 14h2v1h-2zM0 15h1v1h-1zM2 15h4v1h-4zM7 15h1v1h-1zM18 15h1v1h-1zM22 15h2v1h-2zM3 16h4v1h-4zM18 16h2v1h-2zM22 16h2v1h-2zM1 17h1v1h-1zM4 17h1v1h-1zM6 17h2v1h-2zM9 17h1v1h-1zM12 17h1v1h-1zM14 17h1v1h-1zM17 17h1v1h-1zM21 17h1v1h-1zM0 18h8v1h-8zM10 18h1v1h-1zM13 18h1v1h-1zM15 18h2v1h-2zM22 18h3v1h-3zM0 19h1v1h-1zM6 19h1v1h-1zM8 19h1v1h-1zM10 19h1v1h-1zM12 19h3v1h-3zM17 19h1v1h-1zM19 19h4v1h-4zM0 20h1v1h-1zM2 20h3v1h-3zM6 20h4v1h-4zM12 20h2v1h-2zM15 20h1v1h-1zM19 20h1v1h-1zM0 21h1v1h-1zM2 21h3v1h-3zM6 21h1v1h-1zM11 21h1v1h-1zM13 21h1v1h-1zM20 21h1v1h-1zM23 21h2v1h-2zM0 22h1v1h-1zM2 22h3v1h-3zM6 22h2v1h-2zM13 22h1v1h-1zM20 22h5v1h-5zM0 23h1v1h-1zM6 23h1v1h-1zM8 23h2v1h-2zM12 23h2v1h-2zM16 23h3v1h-3zM20 23h1v1h-1zM22 23h3v1h-3zM0 24h8v1h-8zM9 24h1v1h-1zM11 24h4v1h-4zM16 24h2v1h-2zM19 24h1v1h-1zM21 24h3v1h-3z" fill="#555" fill-opacity=".75"/><rect x="8.5" y="8.5" width="8" height="8" fill="#a5dd86"/><rect x="8.5" y="8.5" width="4.5" height="4.5" fill="#4cc06a"/></svg><i style="width:8px"></i><i style="width:14px"></i><i style="width:16px"></i><i style="width:9px"></i></div></div><span class="nm">1006</span></div>
<span class="c" style="left:258px"><span class="d">L685</span></span>
<span class="c dk" style="left:402px"><span class="d">01-29 14:10</span></span>
<span class="c" style="left:534px"><span class="d">1006</span></span>
<span class="c" style="left:638px">台式电脑<span class="d">6</span></span>
<span class="c" style="left:779px"><span class="d">13</span>楼办公室</span>
<span class="c" style="left:903px"><span class="d">20211010</span></span>
<span class="c" style="left:1018px">张三</span>
<span class="c" style="left:1106px"><span class="d">8000</span></span>
</div><div class="row" style="top:792px">
<div class="fix"><span class="cb" style="top:25px"></span><div class="th"><div class="thh"><b>台式电脑1</b></div><div class="thb"><svg width="17" height="17" viewBox="0 0 25 25"><path d="M0 0h7v1h-7zM8 0h2v1h-2zM15 0h1v1h-1zM18 0h7v1h-7zM0 1h1v1h-1zM6 1h2v1h-2zM12 1h3v1h-3zM18 1h1v1h-1zM24 1h1v1h-1zM0 2h1v1h-1zM2 2h3v1h-3zM6 2h1v1h-1zM11 2h1v1h-1zM14 2h2v1h-2zM18 2h1v1h-1zM20 2h3v1h-3zM24 2h1v1h-1zM0 3h1v1h-1zM2 3h3v1h-3zM6 3h1v1h-1zM9 3h2v1h-2zM12 3h3v1h-3zM16 3h3v1h-3zM20 3h3v1h-3zM24 3h1v1h-1zM0 4h1v1h-1zM2 4h3v1h-3zM6 4h1v1h-1zM8 4h2v1h-2zM13 4h2v1h-2zM16 4h1v1h-1zM18 4h1v1h-1zM20 4h3v1h-3zM24 4h1v1h-1zM0 5h1v1h-1zM6 5h1v1h-1zM8 5h4v1h-4zM13 5h2v1h-2zM16 5h1v1h-1zM18 5h1v1h-1zM24 5h1v1h-1zM0 6h9v1h-9zM12 6h2v1h-2zM15 6h1v1h-1zM18 6h7v1h-7zM0 7h1v1h-1zM2 7h5v1h-5zM8 7h2v1h-2zM16 7h1v1h-1zM21 7h4v1h-4zM1 8h1v1h-1zM3 8h1v1h-1zM19 8h2v1h-2zM24 8h1v1h-1zM0 9h1v1h-1zM3 9h1v1h-1zM18 9h5v1h-5zM0 10h1v1h-1zM2 10h3v1h-3zM7 10h1v1h-1zM19 10h1v1h-1zM23 10h1v1h-1zM4 11h1v1h-1zM7 11h1v1h-1zM17 11h1v1h-1zM0 12h1v1h-1zM2 12h2v1h-2zM5 12h3v1h-3zM19 12h1v1h-1zM23 12h1v1h-1zM1 13h2v1h-2zM5 13h3v1h-3zM18 13h1v1h-1zM20 13h1v1h-1zM3 14h2v1h-2zM18 14h1v1h-1zM20 14h1v1h-1zM23 14h2v1h-2zM0 15h1v1h-1zM2 15h4v1h-4zM7 15h1v1h-1zM18 15h1v1h-1zM22 15h2v1h-2zM3 16h4v1h-4zM18 16h2v1h-2zM22 16h2v1h-2zM1 17h1v1h-1zM4 17h1v1h-1zM6 17h2v1h-2zM9 17h1v1h-1zM12 17h1v1h-1zM14 17h1v1h-1zM17 17h1v1h-1zM21 17h1v1h-1zM0 18h8v1h-8zM10 18h1v1h-1zM13 18h1v1h-1zM15 18h2v1h-2zM22 18h3v1h-3zM0 19h1v1h-1zM6 19h1v1h-1zM8 19h1v1h-1zM10 19h1v1h-1zM12 19h3v1h-3zM17 19h1v1h-1zM19 19h4v1h-4zM0 20h1v1h-1zM2 20h3v1h-3zM6 20h4v1h-4zM12 20h2v1h-2zM15 20h1v1h-1zM19 20h1v1h-1zM0 21h1v1h-1zM2 21h3v1h-3zM6 21h1v1h-1zM11 21h1v1h-1zM13 21h1v1h-1zM20 21h1v1h-1zM23 21h2v1h-2zM0 22h1v1h-1zM2 22h3v1h-3zM6 22h2v1h-2zM13 22h1v1h-1zM20 22h5v1h-5zM0 23h1v1h-1zM6 23h1v1h-1zM8 23h2v1h-2zM12 23h2v1h-2zM16 23h3v1h-3zM20 23h1v1h-1zM22 23h3v1h-3zM0 24h8v1h-8zM9 24h1v1h-1zM11 24h4v1h-4zM16 24h2v1h-2zM19 24h1v1h-1zM21 24h3v1h-3z" fill="#555" fill-opacity=".75"/><rect x="8.5" y="8.5" width="8" height="8" fill="#a5dd86"/><rect x="8.5" y="8.5" width="4.5" height="4.5" fill="#4cc06a"/></svg><i style="width:8px"></i><i style="width:14px"></i><i style="width:16px"></i><i style="width:9px"></i></div></div><span class="nm">1007</span></div>
<span class="c" style="left:258px"><span class="d">L684</span></span>
<span class="c dk" style="left:402px"><span class="d">01-29 14:10</span></span>
<span class="c" style="left:534px"><span class="d">1007</span></span>
<span class="c" style="left:638px">台式电脑<span class="d">7</span></span>
<span class="c" style="left:779px"><span class="d">13</span>楼办公室</span>
<span class="c" style="left:903px"><span class="d">20211010</span></span>
<span class="c" style="left:1018px">张三</span>
<span class="c" style="left:1106px"><span class="d">8000</span></span>
</div><div class="row" style="top:859px">
<div class="fix"><span class="cb" style="top:25px"></span><div class="th"><div class="thh"><b>台式电脑1</b></div><div class="thb"><svg width="17" height="17" viewBox="0 0 25 25"><path d="M0 0h7v1h-7zM8 0h2v1h-2zM15 0h1v1h-1zM18 0h7v1h-7zM0 1h1v1h-1zM6 1h2v1h-2zM12 1h3v1h-3zM18 1h1v1h-1zM24 1h1v1h-1zM0 2h1v1h-1zM2 2h3v1h-3zM6 2h1v1h-1zM11 2h1v1h-1zM14 2h2v1h-2zM18 2h1v1h-1zM20 2h3v1h-3zM24 2h1v1h-1zM0 3h1v1h-1zM2 3h3v1h-3zM6 3h1v1h-1zM9 3h2v1h-2zM12 3h3v1h-3zM16 3h3v1h-3zM20 3h3v1h-3zM24 3h1v1h-1zM0 4h1v1h-1zM2 4h3v1h-3zM6 4h1v1h-1zM8 4h2v1h-2zM13 4h2v1h-2zM16 4h1v1h-1zM18 4h1v1h-1zM20 4h3v1h-3zM24 4h1v1h-1zM0 5h1v1h-1zM6 5h1v1h-1zM8 5h4v1h-4zM13 5h2v1h-2zM16 5h1v1h-1zM18 5h1v1h-1zM24 5h1v1h-1zM0 6h9v1h-9zM12 6h2v1h-2zM15 6h1v1h-1zM18 6h7v1h-7zM0 7h1v1h-1zM2 7h5v1h-5zM8 7h2v1h-2zM16 7h1v1h-1zM21 7h4v1h-4zM1 8h1v1h-1zM3 8h1v1h-1zM19 8h2v1h-2zM24 8h1v1h-1zM0 9h1v1h-1zM3 9h1v1h-1zM18 9h5v1h-5zM0 10h1v1h-1zM2 10h3v1h-3zM7 10h1v1h-1zM19 10h1v1h-1zM23 10h1v1h-1zM4 11h1v1h-1zM7 11h1v1h-1zM17 11h1v1h-1zM0 12h1v1h-1zM2 12h2v1h-2zM5 12h3v1h-3zM19 12h1v1h-1zM23 12h1v1h-1zM1 13h2v1h-2zM5 13h3v1h-3zM18 13h1v1h-1zM20 13h1v1h-1zM3 14h2v1h-2zM18 14h1v1h-1zM20 14h1v1h-1zM23 14h2v1h-2zM0 15h1v1h-1zM2 15h4v1h-4zM7 15h1v1h-1zM18 15h1v1h-1zM22 15h2v1h-2zM3 16h4v1h-4zM18 16h2v1h-2zM22 16h2v1h-2zM1 17h1v1h-1zM4 17h1v1h-1zM6 17h2v1h-2zM9 17h1v1h-1zM12 17h1v1h-1zM14 17h1v1h-1zM17 17h1v1h-1zM21 17h1v1h-1zM0 18h8v1h-8zM10 18h1v1h-1zM13 18h1v1h-1zM15 18h2v1h-2zM22 18h3v1h-3zM0 19h1v1h-1zM6 19h1v1h-1zM8 19h1v1h-1zM10 19h1v1h-1zM12 19h3v1h-3zM17 19h1v1h-1zM19 19h4v1h-4zM0 20h1v1h-1zM2 20h3v1h-3zM6 20h4v1h-4zM12 20h2v1h-2zM15 20h1v1h-1zM19 20h1v1h-1zM0 21h1v1h-1zM2 21h3v1h-3zM6 21h1v1h-1zM11 21h1v1h-1zM13 21h1v1h-1zM20 21h1v1h-1zM23 21h2v1h-2zM0 22h1v1h-1zM2 22h3v1h-3zM6 22h2v1h-2zM13 22h1v1h-1zM20 22h5v1h-5zM0 23h1v1h-1zM6 23h1v1h-1zM8 23h2v1h-2zM12 23h2v1h-2zM16 23h3v1h-3zM20 23h1v1h-1zM22 23h3v1h-3zM0 24h8v1h-8zM9 24h1v1h-1zM11 24h4v1h-4zM16 24h2v1h-2zM19 24h1v1h-1zM21 24h3v1h-3z" fill="#555" fill-opacity=".75"/><rect x="8.5" y="8.5" width="8" height="8" fill="#a5dd86"/><rect x="8.5" y="8.5" width="4.5" height="4.5" fill="#4cc06a"/></svg><i style="width:8px"></i><i style="width:14px"></i><i style="width:16px"></i><i style="width:9px"></i></div></div><span class="nm">1008</span></div>
<span class="c" style="left:258px"><span class="d">L683</span></span>
<span class="c dk" style="left:402px"><span class="d">01-29 14:10</span></span>
<span class="c" style="left:534px"><span class="d">1008</span></span>
<span class="c" style="left:638px">台式电脑<span class="d">8</span></span>
<span class="c" style="left:779px"><span class="d">13</span>楼办公室</span>
<span class="c" style="left:903px"><span class="d">20211010</span></span>
<span class="c" style="left:1018px">张三</span>
<span class="c" style="left:1106px"><span class="d">8000</span></span>
</div>
<div class="abs" style="left:0;top:899px;width:1440px;height:1px;background:#e4e5e7"></div>
<div class="abs" style="left:1306px;top:153px;width:121px;height:230px;background:#fff;border-radius:4px;box-shadow:0 2px 10px rgba(0,0,0,.12)">
  <div class="abs t14" style="left:12px;top:10px;color:#aaa;white-space:nowrap">模板编号<span style="margin-right:8px">:</span>D13</div>
  <div class="abs t14 dd" style="top:40px">添加备注</div>
  <div class="abs t14 dd" style="top:72px">重命名模板</div>
  <svg class="abs" style="left:4px;top:96px" width="116" height="35" viewBox="0 0 116 35"><rect x="1" y="1" width="114" height="33" rx="5" fill="none" stroke="#1766c7" stroke-width="2" stroke-dasharray="6 4" stroke-dashoffset="3"/></svg>
  <div class="abs t14 dd" style="top:104px">分享模板</div>
  <div class="abs t14 dd" style="top:136px">复制模板</div>
  <div class="abs t14 dd" style="top:168px">删除模板</div>
  <div class="abs t14 dd" style="top:200px">操作日志</div>
</div>
<div class="fl" style="top:715px"><svg class="abs" style="left:15px;top:6px" width="18" height="17" viewBox="0 0 18 17"><rect x="0.5" y="0" width="17" height="13" rx="1.5" fill="#1766c7"/><path d="M7 3.5 L12 6.5 L7 9.5 Z" fill="#fff"/><rect x="2" y="14.6" width="14" height="1.6" fill="#1766c7"/></svg><span style="top:29px">教程</span></div>
<div class="fl" style="top:771px"><svg class="abs" style="left:15px;top:8px" width="18" height="16" viewBox="0 0 18 16"><path d="M1.5 0 H16.5 A1.5 1.5 0 0 1 18 1.5 V10.5 A1.5 1.5 0 0 1 16.5 12 H10.5 L9 14.5 L7.5 12 H1.5 A1.5 1.5 0 0 1 0 10.5 V1.5 A1.5 1.5 0 0 1 1.5 0 Z" fill="#1766c7"/><circle cx="5" cy="6" r="1.1" fill="#fff"/><circle cx="9" cy="6" r="1.1" fill="#fff"/><circle cx="13" cy="6" r="1.1" fill="#fff"/></svg><span>咨询</span></div>
<div class="fl" style="top:827px"><svg class="abs" style="left:16px;top:9px" width="16" height="10" viewBox="0 0 16 10"><path d="M8 0.5 L15.5 9.5 H0.5 Z" fill="#1766c7"/></svg><span>回顶部</span></div>

</body></html>
